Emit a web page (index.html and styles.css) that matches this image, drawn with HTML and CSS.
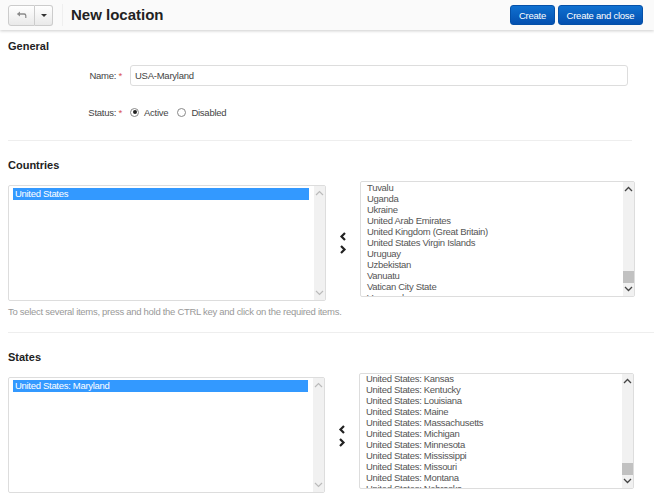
FILE: index.html
```html
<!DOCTYPE html>
<html lang="en">
<head>
    <meta charset="UTF-8">
    <meta name="viewport" content="width=device-width, initial-scale=1.0">
    <title>New location</title>
    <link rel="stylesheet" href="styles.css">
</head>
<body>

<header class="toolbar">
    <div class="btn-group">
        <button class="btn-back" type="button">
            <svg width="11" height="8" viewBox="0 0 11 8"><path d="M4 0.5 L0.8 3 L4 5.5 V3.8 H8 Q9.2 3.8 9.2 5 V7 H10.4 V4.4 Q10.4 2.3 8.2 2.3 H4 Z" fill="#8a8a8a"/></svg>
        </button>
        <button class="btn-caret" type="button"><span class="caret"></span></button>
    </div>
    <h1 class="title">New location</h1>
    <button class="btn-primary btn-create" type="button">Create</button>
    <button class="btn-primary" type="button">Create and close</button>
</header>

<main class="content">
    <h2 class="section-title first">General</h2>

    <div class="form-row name-row">
        <label class="form-label" for="locationName">Name: <span class="req">*</span></label>
        <input class="text-input" type="text" id="locationName" value="USA-Maryland">
    </div>

    <div class="form-row status-row">
        <span class="form-label">Status: <span class="req">*</span></span>
        <span class="radio checked"></span><span class="radio-text">Active</span>
        <span class="radio"></span><span class="radio-text">Disabled</span>
    </div>

    <hr class="divider short">

    <h2 class="section-title">Countries</h2>

    <div class="picker">
        <div class="list list-left">
            <div class="list-items">
                <div class="item selected">United States</div>
            </div>
            <div class="scrollbar faded">
                <svg class="arrow" width="9" height="6" viewBox="0 0 9 6"><path d="M1 5 L4.5 1.5 L8 5" fill="none" stroke="#bbb" stroke-width="1.2"/></svg>
                <svg class="arrow" width="9" height="6" viewBox="0 0 9 6"><path d="M1 1 L4.5 4.5 L8 1" fill="none" stroke="#bbb" stroke-width="1.2"/></svg>
            </div>
        </div>
        <div class="move">
            <svg width="8" height="9" viewBox="0 0 8 9"><path d="M6 1 L2.5 4.5 L6 8" fill="none" stroke="#222" stroke-width="2.2"/></svg>
            <svg width="8" height="9" viewBox="0 0 8 9"><path d="M2 1 L5.5 4.5 L2 8" fill="none" stroke="#222" stroke-width="2.2"/></svg>
        </div>
        <div class="list list-right">
            <div class="list-items">
                <div class="item">Tuvalu</div>
                <div class="item">Uganda</div>
                <div class="item">Ukraine</div>
                <div class="item">United Arab Emirates</div>
                <div class="item">United Kingdom (Great Britain)</div>
                <div class="item">United States Virgin Islands</div>
                <div class="item">Uruguay</div>
                <div class="item">Uzbekistan</div>
                <div class="item">Vanuatu</div>
                <div class="item">Vatican City State</div>
                <div class="item">Venezuela</div>
            </div>
            <div class="scrollbar">
                <svg class="arrow" width="9" height="6" viewBox="0 0 9 6"><path d="M1 5 L4.5 1.5 L8 5" fill="none" stroke="#444" stroke-width="1.3"/></svg>
                <div class="thumb"></div>
                <svg class="arrow" width="9" height="6" viewBox="0 0 9 6"><path d="M1 1 L4.5 4.5 L8 1" fill="none" stroke="#444" stroke-width="1.3"/></svg>
            </div>
        </div>
    </div>
    <p class="help">To select several items, press and hold the CTRL key and click on the required items.</p>

    <hr class="divider wide">

    <h2 class="section-title">States</h2>

    <div class="picker picker-states">
        <div class="list list-left">
            <div class="list-items">
                <div class="item selected">United States: Maryland</div>
            </div>
            <div class="scrollbar faded">
                <svg class="arrow" width="9" height="6" viewBox="0 0 9 6"><path d="M1 5 L4.5 1.5 L8 5" fill="none" stroke="#bbb" stroke-width="1.2"/></svg>
                <svg class="arrow" width="9" height="6" viewBox="0 0 9 6"><path d="M1 1 L4.5 4.5 L8 1" fill="none" stroke="#bbb" stroke-width="1.2"/></svg>
            </div>
        </div>
        <div class="move">
            <svg width="8" height="9" viewBox="0 0 8 9"><path d="M6 1 L2.5 4.5 L6 8" fill="none" stroke="#222" stroke-width="2.2"/></svg>
            <svg width="8" height="9" viewBox="0 0 8 9"><path d="M2 1 L5.5 4.5 L2 8" fill="none" stroke="#222" stroke-width="2.2"/></svg>
        </div>
        <div class="list list-right">
            <div class="list-items">
                <div class="item">United States: Kansas</div>
                <div class="item">United States: Kentucky</div>
                <div class="item">United States: Louisiana</div>
                <div class="item">United States: Maine</div>
                <div class="item">United States: Massachusetts</div>
                <div class="item">United States: Michigan</div>
                <div class="item">United States: Minnesota</div>
                <div class="item">United States: Mississippi</div>
                <div class="item">United States: Missouri</div>
                <div class="item">United States: Montana</div>
                <div class="item">United States: Nebraska</div>
            </div>
            <div class="scrollbar">
                <svg class="arrow" width="9" height="6" viewBox="0 0 9 6"><path d="M1 5 L4.5 1.5 L8 5" fill="none" stroke="#444" stroke-width="1.3"/></svg>
                <div class="thumb"></div>
                <svg class="arrow" width="9" height="6" viewBox="0 0 9 6"><path d="M1 1 L4.5 4.5 L8 1" fill="none" stroke="#444" stroke-width="1.3"/></svg>
            </div>
        </div>
    </div>
</main>

</body>
</html>
```

FILE: styles.css
```css
html, body {
    height: 500px;
    overflow: hidden;
}
body {
    margin: 0;
    background-color: #fff;
    font-family: "Liberation Sans", Arial, sans-serif;
    font-size: 9.5px;
    letter-spacing: -0.25px;
    color: #444;
}

.toolbar {
    display: flex;
    align-items: center;
    height: 30px;
    padding: 0 11px 0 8px;
    background-color: #fafafa;
    box-shadow: 0 1px 3px rgba(0, 0, 0, 0.2);
    box-sizing: border-box;
}
.btn-group {
    display: flex;
    height: 21px;
    padding-right: 9px;
}
.btn-back, .btn-caret {
    display: flex;
    align-items: center;
    justify-content: center;
    padding: 0;
    background: linear-gradient(#fff, #e9e9e9);
    border: 1px solid #ccc;
    cursor: pointer;
}
.btn-back {
    width: 27px;
    border-radius: 3px 0 0 3px;
}
.btn-caret {
    width: 18px;
    border-left: none;
    border-radius: 0 3px 3px 0;
}
.caret {
    border-top: 3px solid #333;
    border-left: 3px solid transparent;
    border-right: 3px solid transparent;
}
.title {
    flex: 1;
    margin: 0;
    padding-left: 8px;
    border-left: 1px solid #efefef;
    font-size: 15px;
    line-height: 22px;
    font-weight: bold;
    letter-spacing: normal;
    color: #222;
}
.btn-primary {
    width: 85px;
    height: 20px;
    padding: 0;
    background: linear-gradient(#0f70d0, #0450b0);
    border: 1px solid #0450a8;
    border-radius: 3px;
    font-family: inherit;
    font-size: 9.5px;
    letter-spacing: -0.25px;
    color: #fff;
    cursor: pointer;
}
.btn-create {
    width: 45px;
    margin-right: 3px;
}

.content {
    padding: 0 22px 0 8px;
}
.section-title {
    margin: 0;
    font-size: 11px;
    line-height: 14px;
    font-weight: bold;
    letter-spacing: normal;
    color: #222;
}
.section-title.first {
    padding-top: 9px;
}

.form-row {
    display: flex;
    align-items: center;
}
.form-label {
    width: 114px;
    padding-right: 8px;
    text-align: right;
    box-sizing: content-box;
}
.req {
    color: #d9534f;
}
.name-row {
    margin-top: 12px;
}
.status-row {
    margin-top: 18px;
    height: 16px;
}
.text-input {
    flex: 1;
    height: 21px;
    padding: 0 4px;
    background-color: #fff;
    border: 1px solid #ddd;
    border-radius: 3px;
    box-sizing: border-box;
    font-family: inherit;
    font-size: 9.5px;
    letter-spacing: -0.25px;
    color: #444;
    margin-right: 4px;
}
.radio {
    position: relative;
    width: 7px;
    height: 7px;
    border: 1px solid #888;
    border-radius: 50%;
    background-color: #fff;
}
.radio.checked::after {
    content: "";
    position: absolute;
    left: 1.5px;
    top: 1.5px;
    width: 4px;
    height: 4px;
    border-radius: 50%;
    background-color: #222;
}
.radio-text {
    margin: 0 9px 0 5px;
}

.divider {
    margin: 15px 0 17px;
    border: none;
    border-top: 1px solid #eee;
}
.divider.short {
    margin: 20px 0 17px;
}
.divider.wide {
    margin-right: -22px;
}

.picker {
    display: flex;
    align-items: flex-start;
    margin-top: 13px;
}
.list {
    display: flex;
    flex-shrink: 0;
    height: 116px;
    background-color: #fff;
    border: 1px solid #ddd;
    border-radius: 2px;
    box-sizing: border-box;
    overflow: hidden;
}
.list-left {
    width: 318px;
}
.list-right {
    width: 275px;
    margin-top: -4px;
}
.picker-states .list-left {
    width: 317px;
}
.list-items {
    flex: 1;
    padding: 2px 5px 0 4px;
    overflow: hidden;
    line-height: 11px;
}
.list-right .list-items {
    padding: 0 0 0 6px;
}
.picker-states .list-right .list-items {
    margin-top: -1px;
}
.item {
    white-space: nowrap;
    font-size: 9.5px;
    letter-spacing: -0.3px;
    color: #555;
}
.item.selected {
    height: 12px;
    padding-left: 2px;
    line-height: 12px;
    background-color: #3399ff;
    color: #fff;
}
.scrollbar {
    display: flex;
    flex-direction: column;
    align-items: center;
    justify-content: space-between;
    width: 11px;
    padding: 4px 0;
    background-color: #f1f1f1;
    position: relative;
}
.thumb {
    position: absolute;
    left: 0;
    right: 0;
    bottom: 13px;
    height: 12px;
    background-color: #c1c1c1;
}
.move {
    display: flex;
    flex-shrink: 0;
    flex-direction: column;
    align-items: center;
    gap: 4px;
    width: 34px;
    padding-top: 47px;
}
.picker-states .move {
    padding-top: 48px;
}
.help {
    margin: 5px 0 0;
    font-size: 9.5px;
    line-height: 11px;
    letter-spacing: -0.29px;
    color: #999;
}
.picker-states {
    margin-top: 13px;
}
```
